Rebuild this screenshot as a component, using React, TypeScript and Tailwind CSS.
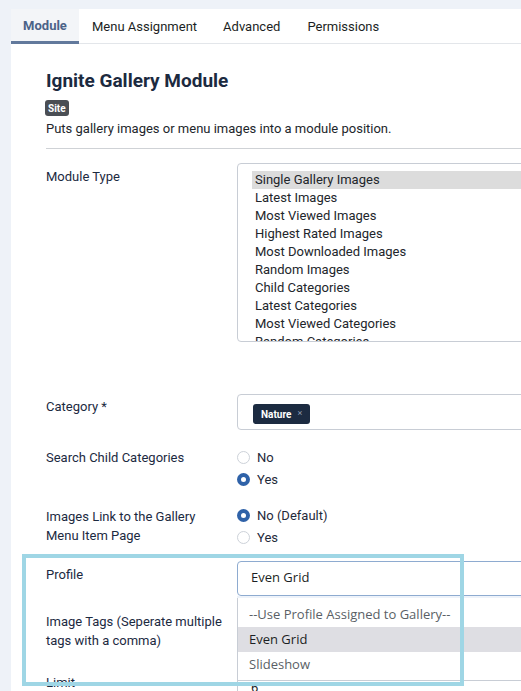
import React from 'react';

const moduleTypes = [
  'Single Gallery Images',
  'Latest Images',
  'Most Viewed Images',
  'Highest Rated Images',
  'Most Downloaded Images',
  'Random Images',
  'Child Categories',
  'Latest Categories',
  'Most Viewed Categories',
  'Random Categories',
];

function Radio({ checked, label }: { checked?: boolean; label: string }) {
  return (
    <div className="flex items-center h-[22px]">
      {checked ? (
        <span className="w-[13px] h-[13px] rounded-full bg-[#2f62a8] flex items-center justify-center">
          <span className="w-[5px] h-[5px] rounded-full bg-white" />
        </span>
      ) : (
        <span className="w-[13px] h-[13px] rounded-full border border-[#cdd2d9] bg-white" />
      )}
      <span className="ml-[7px] text-[13px] text-[#1f2a3a]">{label}</span>
    </div>
  );
}

export default function App() {
  return (
    <div
      className="w-[521px] h-[691px] overflow-hidden bg-[#eef2f8] pl-[11px] pt-[9px]"
      style={{ fontFamily: 'Roboto, "Liberation Sans", sans-serif' }}
    >
      <div className="bg-white h-full w-[600px] relative">
        {/* tabs */}
        <div className="flex h-[35px] border-b border-[#e3e6ea] text-[13px] text-[#1c1f24]">
          <div className="w-[68px] flex items-center justify-center pt-[2px] bg-[#f3f5f8] font-bold text-[#4b6388] border-b-[3px] border-[#62799c] -mb-px">
            Module
          </div>
          <div className="flex items-center pt-[2px] pl-[13px]">Menu Assignment</div>
          <div className="flex items-center pt-[2px] pl-[26px]">Advanced</div>
          <div className="flex items-center pt-[2px] pl-[27px]">Permissions</div>
        </div>

        <div className="pl-[35px]">
          <h1 className="mt-[25px] text-[19px] leading-[24px] font-bold text-[#1c2a3f]">Ignite Gallery Module</h1>
          <div className="mt-[7px] inline-flex h-[16px] px-[3px] items-center rounded-[3px] bg-[#4a4e54] text-white text-[10px] font-bold -ml-px">
            Site
          </div>
          <p className="mt-[1px] text-[13px] leading-[18px] text-[#22262b]">
            Puts gallery images or menu images into a module position.
          </p>
          <div className="mt-[10px] border-t border-[#cfd2d6]" />

          {/* Module Type */}
          <div className="flex mt-[14px]">
            <div className="w-[191px] pt-[5px] text-[13px] leading-[18px] text-[#1c2a3f]">Module Type</div>
            <div className="w-[300px] h-[179px] border border-[#c8cdd5] rounded-[4px] overflow-hidden pt-[7px] pl-[14px]">
              {moduleTypes.map((t, i) => (
                <div
                  key={t}
                  className={`h-[18px] leading-[18px] pl-[3px] text-[13px] text-[#22262b] ${i === 0 ? 'bg-[#dcdcdc]' : ''}`}
                >
                  {t}
                </div>
              ))}
            </div>
          </div>

          {/* Category */}
          <div className="flex mt-[52px]">
            <div className="w-[191px] pt-[4px] text-[13px] leading-[18px] text-[#1c2a3f]">Category *</div>
            <div className="w-[300px] h-[36px] border border-[#c8cdd5] rounded-[4px] pl-[15px] pt-[6px]">
              <span className="inline-flex items-center h-[20px] px-[8px] rounded-[3px] bg-[#1c2b41] text-white text-[10px] font-bold">
                Nature
                <span className="ml-[6px] text-[9px] text-[#8f9aab] font-normal">×</span>
              </span>
            </div>
          </div>

          {/* Search Child */}
          <div className="flex mt-[17px]">
            <div className="w-[191px] pt-[2px] text-[13px] leading-[18px] text-[#1c2a3f]">Search Child Categories</div>
            <div>
              <Radio label="No" />
              <Radio checked label="Yes" />
            </div>
          </div>

          {/* Images Link */}
          <div className="flex mt-[14px]">
            <div className="w-[191px] pt-[2px] text-[13px] leading-[19px] text-[#1c2a3f]">
              Images Link to the Gallery
              <br />
              Menu Item Page
            </div>
            <div>
              <Radio checked label="No (Default)" />
              <Radio label="Yes" />
            </div>
          </div>

          {/* Profile */}
          <div className="flex mt-[12px]">
            <div className="w-[191px] pt-[5px] text-[13px] leading-[18px] text-[#1c2a3f]">Profile</div>
            <div
              className="w-[300px] h-[35px] border border-[#8eabd0] rounded-[4px] pl-[13px] flex items-center text-[13px] text-[#1c1f24]"
              style={{ fontFamily: '"Open Sans", "Noto Sans", sans-serif' }}
            >
              Even Grid
            </div>
          </div>

          {/* Image Tags + dropdown */}
          <div className="flex">
            <div className="w-[191px] pt-[16px] text-[13px] leading-[19px] text-[#1c2a3f]">
              Image Tags (Seperate multiple
              <br />
              tags with a comma)
              <div className="mt-[23px]">Limit</div>
            </div>
            <div>
              <div className="h-[2px] w-[300px] bg-[#eef3fa]" />
              <div
                className="w-[300px] h-[82px] border-l border-[#c8cdd5] bg-white text-[13px] pt-[4px]"
                style={{ fontFamily: '"Open Sans", "Noto Sans", sans-serif' }}
              >
                <div className="h-[25px] leading-[25px] pl-[11px] text-[#5a5f66]">--Use Profile Assigned to Gallery--</div>
                <div className="h-[25px] leading-[25px] pl-[11px] text-[#1c1f24] bg-[#dedee3]">Even Grid</div>
                <div className="h-[25px] leading-[25px] pl-[11px] text-[#5a5f66]">Slideshow</div>
              </div>
              <div className="w-[300px] h-[20px] border-l border-t border-[#c8cdd5] pl-[13px] text-[13px] text-[#1c1f24] leading-[14px]">
                6
              </div>
            </div>
          </div>
        </div>

        {/* highlight frame */}
        <div className="absolute left-[11px] top-[545px] w-[442px] h-[132px] border-[4px] border-[#9fd6e5] pointer-events-none" />
      </div>
    </div>
  );
}
